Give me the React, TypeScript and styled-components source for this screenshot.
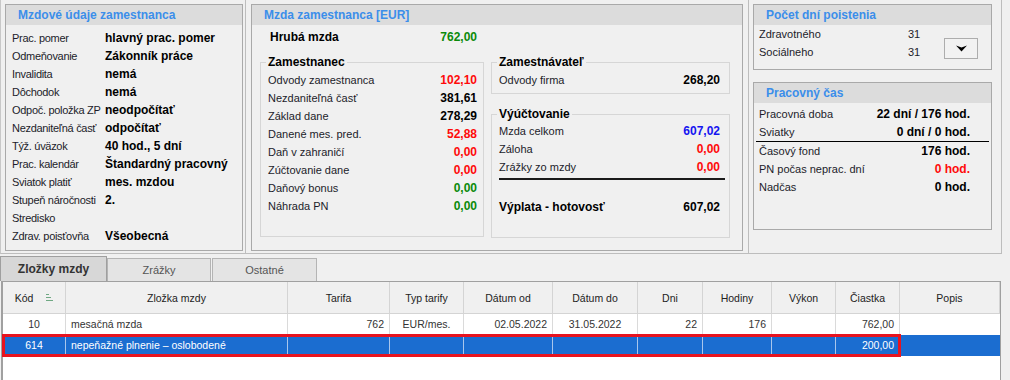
import React from "react";
import styled, { createGlobalStyle } from "styled-components";

const GlobalStyle = createGlobalStyle`
  html, body {
    margin: 0;
    padding: 0;
    background: #f0f0f0;
  }
  body {
    font-family: "Liberation Sans", Arial, sans-serif;
    font-size: 11px;
    color: #1c1c2a;
    width: 1010px;
    height: 380px;
    overflow: hidden;
  }
`;

const Page = styled.div`
  display: flex;
  flex-direction: column;
  height: 380px;
`;

const TopRow = styled.div`
  display: flex;
  height: 254px;
  flex: none;
`;

const Frame = styled.div<{ $w: number; $left?: boolean; $pl: number }>`
  width: ${(p) => p.$w}px;
  box-sizing: border-box;
  border-right: 1px solid #bdbdbd;
  border-bottom: 1px solid #bdbdbd;
  border-left: ${(p) => (p.$left ? "1px solid #c8c8c8" : "none")};
  padding: 4px 0 0 ${(p) => p.$pl}px;
`;

const Panel = styled.div<{ $w: number; $h: number }>`
  width: ${(p) => p.$w}px;
  height: ${(p) => p.$h}px;
  box-sizing: border-box;
  border: 1px solid #a9a9a9;
  background: #f0f0f0;
`;

const PanelHead = styled.div`
  height: 20px;
  line-height: 20px;
  background: #dcdcdc;
  padding-left: 12px;
  font-weight: bold;
  font-size: 12px;
  color: #3b8eea;
`;

const InfoList = styled.div`
  padding: 4px 0 0 6px;
`;

const InfoRow = styled.div`
  display: grid;
  grid-template-columns: 93px 1fr;
  height: 18px;
  line-height: 18px;
  white-space: nowrap;
`;

const InfoLabel = styled.span`
  letter-spacing: -0.3px;
`;

const Strong = styled.span<{ $c?: string; $size?: number }>`
  font-weight: bold;
  font-size: ${(p) => p.$size ?? 12}px;
  color: ${(p) => p.$c ?? "#000"};
`;

const GrossRow = styled.div`
  width: 224px;
  box-sizing: border-box;
  margin: 3px 0 0 8px;
  padding: 0 7px 0 10px;
  height: 18px;
  line-height: 18px;
  display: flex;
  justify-content: space-between;
`;

const Columns = styled.div`
  display: flex;
  gap: 7px;
  margin-top: 9px;
  padding-left: 8px;
`;

const Column = styled.div`
  display: flex;
  flex-direction: column;
  gap: 13px;
`;

const Group = styled.fieldset<{ $w: number; $h: number; $pr: number }>`
  margin: 0;
  min-width: 0;
  width: ${(p) => p.$w}px;
  height: ${(p) => p.$h}px;
  box-sizing: border-box;
  padding: 0 ${(p) => p.$pr}px 0 7px;
  border: 1px solid #d6d6d6;
`;

const Legend = styled.legend`
  margin-left: -2px;
  padding: 0 2px;
  font-weight: bold;
  font-size: 12px;
  line-height: 14px;
  color: #000;
`;

const Lines = styled.div<{ $mt: number }>`
  margin-top: ${(p) => p.$mt}px;
`;

const ValueRow = styled.div`
  display: flex;
  justify-content: space-between;
  height: 18px;
  line-height: 18px;
  white-space: nowrap;
`;

const SumLine = styled.div`
  height: 2px;
  background: #1a1a1a;
  margin: 2px -5px 18px 0;
`;

const Box = styled.div<{ $h: number; $mt?: number }>`
  width: 239px;
  height: ${(p) => p.$h}px;
  margin-top: ${(p) => p.$mt ?? 0}px;
  box-sizing: border-box;
  border: 1px solid #a9a9a9;
`;

const DaysBody = styled.div`
  display: flex;
  padding-left: 5px;
`;

const DaysRow = styled.div`
  display: grid;
  grid-template-columns: 149px auto;
  height: 18px;
  line-height: 18px;
`;

const DropButton = styled.button`
  margin: 13px 13px 0 auto;
  width: 34px;
  height: 21px;
  box-sizing: border-box;
  border: 1px solid #adadad;
  background: #f2f2f2;
  display: flex;
  align-items: center;
  justify-content: center;
  padding: 0;
`;

const TimeList = styled.div`
  padding-top: 2px;
`;

const TimeRow = styled.div<{ $line?: boolean }>`
  display: flex;
  justify-content: space-between;
  margin: 0 2px;
  padding: 0 19px 0 3px;
  height: 18px;
  line-height: 18px;
  border-bottom: ${(p) => (p.$line ? "1px solid #000" : "none")};
  white-space: nowrap;
`;

const TabStrip = styled.div`
  display: flex;
  align-items: flex-end;
  height: 25px;
  margin-top: 2px;
  flex: none;
`;

const Tab = styled.div<{ $w: number; $active?: boolean }>`
  width: ${(p) => p.$w}px;
  height: ${(p) => (p.$active ? 25 : 23)}px;
  box-sizing: border-box;
  display: flex;
  align-items: center;
  justify-content: center;
  border: 1px solid ${(p) => (p.$active ? "#9f9f9f" : "#b4b4b4")};
  border-bottom: none;
  margin-right: ${(p) => (p.$active ? 0 : 1)}px;
  background: ${(p) => (p.$active ? "#d7d7d7" : "#e4e4e4")};
  color: ${(p) => (p.$active ? "#333" : "#555")};
  font-weight: ${(p) => (p.$active ? "bold" : "normal")};
  font-size: ${(p) => (p.$active ? 12 : 11)}px;
`;

const COLS = "63px 222px 102px 74px 89px 85px 65px 69px 64px 64px";

const Grid = styled.div`
  flex: 1;
  width: 1000px;
  margin-left: 1px;
  box-sizing: border-box;
  border: 1px solid #a0a0a0;
  border-left-width: 2px;
  border-bottom: none;
  background: #fff;
  font-size: 10.5px;
`;

const HeadRow = styled.div`
  display: grid;
  grid-template-columns: ${COLS} 1fr;
  height: 31px;
  background: #f0f0f0;
  border-bottom: 1px solid #d4d4d4;
`;

const HeadCell = styled.div`
  display: flex;
  align-items: center;
  justify-content: center;
  gap: 13px;
  border-right: 1px solid #d4d4d4;
  color: #222;
`;

const DataRow = styled.div<{ $selected?: boolean }>`
  display: flex;
  height: 21px;
  background: ${(p) => (p.$selected ? "#1b6dd0" : "#fff")};
  color: ${(p) => (p.$selected ? "#fff" : "#333")};
`;

const Marked = styled.div<{ $on?: boolean }>`
  display: grid;
  grid-template-columns: ${COLS};
  outline: ${(p) => (p.$on ? "3px solid #e8141f" : "none")};
  outline-offset: -2px;
`;

const Cell = styled.div<{ $align?: string; $selected?: boolean }>`
  padding: 0 5px;
  line-height: 21px;
  text-align: ${(p) => p.$align ?? "left"};
  white-space: nowrap;
  overflow: hidden;
  border-right: 1px solid ${(p) => (p.$selected ? "#a9c6ec" : "#dadada")};
`;

const SortGlyph = () => (
  <svg width="7" height="7" viewBox="0 0 7 7">
    <g stroke="#6fa883" strokeWidth="1">
      <line x1="0" y1="0.5" x2="3" y2="0.5" />
      <line x1="0" y1="3.5" x2="5" y2="3.5" />
      <line x1="0" y1="6.5" x2="7" y2="6.5" />
    </g>
  </svg>
);

const ArrowDown = () => (
  <svg width="11" height="7" viewBox="0 0 11 7">
    <path d="M0 0.5 L5.5 6.5 L11 0.5 L5.5 2.5 Z" fill="#000" />
  </svg>
);

const info: [string, string][] = [
  ["Prac. pomer", "hlavný prac. pomer"],
  ["Odmeňovanie", "Zákonník práce"],
  ["Invalidita", "nemá"],
  ["Dôchodok", "nemá"],
  ["Odpoč. položka ZP", "neodpočítať"],
  ["Nezdaniteľná časť", "odpočítať"],
  ["Týž. úväzok", "40 hod., 5 dní"],
  ["Prac. kalendár", "Štandardný pracovný"],
  ["Sviatok platiť", "mes. mzdou"],
  ["Stupeň náročnosti", "2."],
  ["Stredisko", ""],
  ["Zdrav. poisťovňa", "Všeobecná"],
];

const RED = "#ff0a0a";
const GREEN = "#0a8a0a";

const employee: [string, string, string?][] = [
  ["Odvody zamestnanca", "102,10", RED],
  ["Nezdaniteľná časť", "381,61"],
  ["Základ dane", "278,29"],
  ["Danené mes. pred.", "52,88", RED],
  ["Daň v zahraničí", "0,00", RED],
  ["Zúčtovanie dane", "0,00", RED],
  ["Daňový bonus", "0,00", GREEN],
  ["Náhrada PN", "0,00", GREEN],
];

const settlement: [string, string, string][] = [
  ["Mzda celkom", "607,02", "#1414f0"],
  ["Záloha", "0,00", RED],
  ["Zrážky zo mzdy", "0,00", RED],
];

const work: [string, string, string?, boolean?][] = [
  ["Pracovná doba", "22 dní / 176 hod."],
  ["Sviatky", "0 dní / 0 hod.", undefined, true],
  ["Časový fond", "176 hod."],
  ["PN počas neprac. dní", "0 hod.", RED],
  ["Nadčas", "0 hod."],
];

const headers = ["Zložka mzdy", "Tarifa", "Typ tarify", "Dátum od", "Dátum do", "Dni", "Hodiny", "Výkon", "Čiastka", "Popis"];
const aligns = ["center", "left", "right", "center", "right", "center", "right", "right", "right", "right"];

const rows = [
  ["10", "mesačná mzda", "762", "EUR/mes.", "02.05.2022", "31.05.2022", "22", "176", "", "762,00"],
  ["614", "nepeňažné plnenie – oslobodené", "", "", "", "", "", "", "", "200,00"],
];

export default function App() {
  return (
    <Page>
      <GlobalStyle />
      <TopRow>
        <Frame $w={246} $left $pl={4}>
          <Panel $w={238} $h={247}>
            <PanelHead>Mzdové údaje zamestnanca</PanelHead>
            <InfoList>
              {info.map(([k, v]) => (
                <InfoRow key={k}>
                  <InfoLabel>{k}</InfoLabel>
                  <Strong>{v}</Strong>
                </InfoRow>
              ))}
            </InfoList>
          </Panel>
        </Frame>

        <Frame $w={503} $pl={5}>
          <Panel $w={492} $h={247}>
            <PanelHead>Mzda zamestnanca [EUR]</PanelHead>
            <GrossRow>
              <Strong>Hrubá mzda</Strong>
              <Strong $c={GREEN}>762,00</Strong>
            </GrossRow>
            <Columns>
              <Column>
                <Group $w={224} $h={182} $pr={6}>
                  <Legend>Zamestnanec</Legend>
                  <Lines $mt={2}>
                    {employee.map(([k, v, c]) => (
                      <ValueRow key={k}>
                        <span>{k}</span>
                        <Strong $c={c}>{v}</Strong>
                      </ValueRow>
                    ))}
                  </Lines>
                </Group>
              </Column>
              <Column>
                <Group $w={239} $h={39} $pr={9}>
                  <Legend>Zamestnávateľ</Legend>
                  <Lines $mt={2}>
                    <ValueRow>
                      <span>Odvody firma</span>
                      <Strong>268,20</Strong>
                    </ValueRow>
                  </Lines>
                </Group>
                <Group $w={239} $h={131} $pr={9}>
                  <Legend>Výúčtovanie</Legend>
                  <Lines $mt={1}>
                    {settlement.map(([k, v, c]) => (
                      <ValueRow key={k}>
                        <span>{k}</span>
                        <Strong $c={c}>{v}</Strong>
                      </ValueRow>
                    ))}
                    <SumLine />
                    <ValueRow>
                      <Strong>Výplata - hotovosť</Strong>
                      <Strong>607,02</Strong>
                    </ValueRow>
                  </Lines>
                </Group>
              </Column>
            </Columns>
          </Panel>
        </Frame>

        <Frame $w={253} $pl={4}>
          <Box $h={66}>
            <PanelHead>Počet dní poistenia</PanelHead>
            <DaysBody>
              <div>
                <DaysRow>
                  <span>Zdravotného</span>
                  <span>31</span>
                </DaysRow>
                <DaysRow>
                  <span>Sociálneho</span>
                  <span>31</span>
                </DaysRow>
              </div>
              <DropButton>
                <ArrowDown />
              </DropButton>
            </DaysBody>
          </Box>
          <Box $h={148} $mt={12}>
            <PanelHead>Pracovný čas</PanelHead>
            <TimeList>
              {work.map(([k, v, c, line]) => (
                <TimeRow key={k} $line={line}>
                  <span>{k}</span>
                  <Strong $c={c}>{v}</Strong>
                </TimeRow>
              ))}
            </TimeList>
          </Box>
        </Frame>
      </TopRow>

      <TabStrip>
        <Tab $w={107} $active>Zložky mzdy</Tab>
        <Tab $w={104}>Zrážky</Tab>
        <Tab $w={105}>Ostatné</Tab>
      </TabStrip>

      <Grid>
        <HeadRow>
          <HeadCell>
            <span>Kód</span>
            <SortGlyph />
          </HeadCell>
          {headers.map((h) => (
            <HeadCell key={h}>{h}</HeadCell>
          ))}
        </HeadRow>
        {rows.map((r, i) => {
          const sel = i === 1;
          return (
            <DataRow key={r[0]} $selected={sel}>
              <Marked $on={sel}>
                {r.map((v, j) => (
                  <Cell key={j} $align={aligns[j]} $selected={sel}>
                    {v}
                  </Cell>
                ))}
              </Marked>
            </DataRow>
          );
        })}
      </Grid>
    </Page>
  );
}
